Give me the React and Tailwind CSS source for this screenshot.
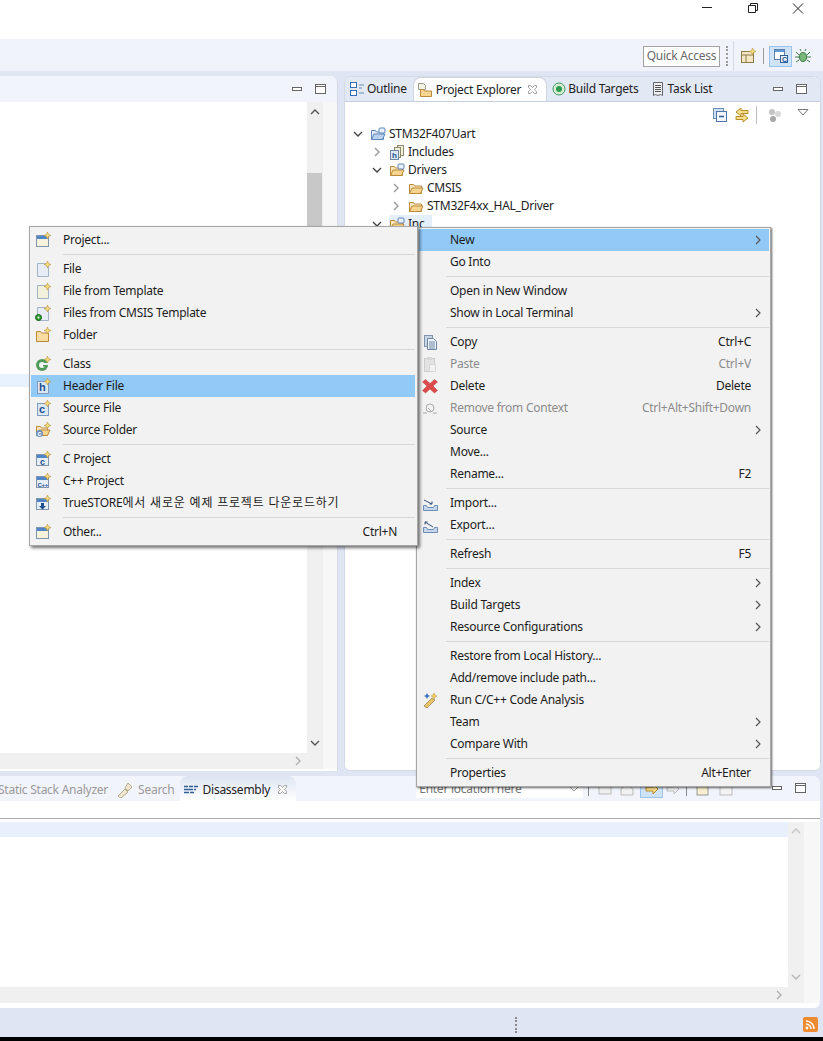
import React from 'react';

const FONT = '"Noto Sans", "Noto Sans CJK KR", sans-serif';

const Star = () => (
  <path d="M12.5 0l1 2.5 2.5 1-2.5 1-1 2.5-1-2.5-2.5-1 2.5-1z" fill="#f6dc7a" stroke="#b8923a" strokeWidth="0.6" />
);

const Svg = ({ children, size = 16, className = '' }) => (
  <svg width={size} height={size} viewBox="0 0 16 16" className={`shrink-0 ${className}`}>{children}</svg>
);

const Page = ({ fill = '#e6edf7' }) => (
  <path d="M2.5 2.5h8l3 3v10h-11z" fill={fill} stroke="#a5b3c6" />
);

const Win = ({ body = '#f7f2dc' }) => (
  <g>
    <rect x="1.5" y="3.5" width="12" height="11" fill={body} stroke="#7f94ad" />
    <rect x="2" y="4" width="11" height="3" fill="#4f86c6" />
  </g>
);

const FolderShape = ({ stroke = '#b98a3c', fill = '#f7d48f' }) => (
  <g>
    <path d="M1.5 13.5v-9h4l1 1.5h6v7.5z" fill="#fbe7bd" stroke={stroke} />
    <path d="M1.5 13.5l2.5-5.5h11l-2.5 5.5z" fill={fill} stroke={stroke} />
  </g>
);

const BlueLetter = ({ ch, x = 4, y = 13, size = 9, color = '#1f4f8f' }) => (
  <text x={x} y={y} fontSize={size} fontWeight="700" fill={color} fontFamily="Liberation Sans, sans-serif">{ch}</text>
);

const ICONS = {
  project: <><Win /><Star /></>,
  file: <><Page /><Star /></>,
  template: <><Page fill="#f3f0dc" /><Star /></>,
  cmsis: <><Page /><circle cx="3.5" cy="12.5" r="3" fill="#2f9e2f" stroke="#15651a" /><circle cx="3.5" cy="12.5" r="1" fill="#fff" /><Star /></>,
  folder: <><path d="M1.5 14.5v-10h4l1 1.5h7v8.5z" fill="#f9dca0" stroke="#b98a3c" /><Star /></>,
  klass: <><circle cx="7" cy="9" r="6" fill="#4f9a58" /><circle cx="7" cy="9" r="3" fill="#f2f2f2" /><rect x="8" y="7" width="5" height="2" fill="#f2f2f2" /><rect x="8" y="9" width="4" height="1.5" fill="#4f9a58" /><Star /></>,
  header: <><rect x="2.5" y="3.5" width="11" height="12" fill="#dbe7f5" stroke="#7f9cc0" /><BlueLetter ch="h" size={11} /><Star /></>,
  source: <><rect x="2.5" y="3.5" width="11" height="12" fill="#dbe7f5" stroke="#7f9cc0" /><BlueLetter ch="c" size={11} /><Star /></>,
  srcFolder: <><FolderShape /><circle cx="4.5" cy="11.5" r="3.5" fill="#6f8fc0" /><BlueLetter ch="c" x={2.4} y={14} size={7} color="#fff" /><Star /></>,
  cProject: <><Win body="#e6eef8" /><BlueLetter ch="c" x={5} y={14} size={9} /><Star /></>,
  cppProject: <><Win body="#e6eef8" /><BlueLetter ch="C++" x={2.4} y={13.5} size={6} /><Star /></>,
  store: <><Win body="#e6eef8" /><path d="M6 8h3v3h2l-3.5 3.5L4 11h2z" fill="#1f4f8f" /><Star /></>,
  copy: (
    <g>
      <rect x="2.5" y="1.5" width="8" height="11" fill="#c9d6e6" stroke="#7f94ad" />
      <path d="M5.5 4.5h6l3 3v8h-9z" fill="#eef3fa" stroke="#6d86a6" />
      <path d="M7 8h6M7 10h6M7 12h6M7 14h6" stroke="#6d86a6" />
    </g>
  ),
  paste: (
    <g opacity="0.55">
      <rect x="2.5" y="2.5" width="10" height="13" fill="#d8d8d8" stroke="#b0b0b0" />
      <rect x="5" y="1" width="5" height="3" fill="#c4c4c4" />
      <path d="M7.5 8.5h6v7h-6z" fill="#f2f2f2" stroke="#c0c0c0" />
    </g>
  ),
  del: <path d="M3.5 1.5L8 5.5l4.5-4 3 2.5L11 8l4.5 4.5-3 2.5L8 11l-4.5 4-3-2.5L5 8 .5 4z" fill="#dc4a4a" stroke="#c23a3a" strokeWidth="0.5" />,
  remove: (
    <g fill="none" stroke="#a8a8a8">
      <path d="M1 13h4M11 13h4" />
      <circle cx="8" cy="8" r="4" />
      <path d="M6 8l3 3" />
    </g>
  ),
  importIcon: (
    <g>
      <path d="M1.5 10.5v5h14v-5h-3l-1 2h-6l-1-2z" fill="#c7d8ec" stroke="#6d8db5" />
      <path d="M2 5l8 4M10 9V6.5M10 9H7.5" stroke="#33507a" fill="none" />
    </g>
  ),
  exportIcon: (
    <g>
      <path d="M1.5 10.5v5h14v-5h-3l-1 2h-6l-1-2z" fill="#c7d8ec" stroke="#6d8db5" />
      <path d="M11 10L3 5M3 5v2.5M3 5h2.5" stroke="#33507a" fill="none" />
    </g>
  ),
  wand: (
    <g>
      <path d="M2 14l8-8 3 2-8 8z" fill="#e8c46a" stroke="#8c6a2a" strokeWidth="0.6" />
      <path d="M5 1l1 2 2 1-2 1-1 2-1-2-2-1 2-1z" fill="#3f6fc0" />
      <path d="M12 1l1 2 2 1-2 1-1 2-1-2-2-1 2-1z" fill="#f2cf5a" stroke="#a9852c" strokeWidth="0.4" />
    </g>
  ),
};

const Icon = ({ name }) => <Svg>{ICONS[name]}</Svg>;

const Arrow = ({ gray }) => (
  <svg width="6" height="10" viewBox="0 0 6 10" className="shrink-0">
    <path d="M1 1l4 4-4 4" fill="none" stroke={gray ? '#aaa' : '#555'} strokeWidth="1.2" />
  </svg>
);

const Sep = ({ className }) => (
  <div className={`h-[7px] flex items-center ${className}`}>
    <div className="h-px w-full bg-[#d7d7d7]" />
  </div>
);

const Item = ({ icon, label, shortcut, arrow, disabled, active, left }) => (
  <div className={`h-[22px] flex items-center text-[12px] tracking-[-0.25px] ${active ? 'bg-[#91c9f7]' : ''} ${disabled ? 'text-[#8c8c8c]' : 'text-[#1c1c1c]'}`}>
    <div className={`flex shrink-0 ${left ? 'w-[32px] pl-[4px]' : 'w-[31px] pl-[3px]'}`}>{icon && <Icon name={icon} />}</div>
    <span className="whitespace-nowrap">{label}</span>
    {shortcut && <span className="ml-auto mr-[18px] whitespace-nowrap">{shortcut}</span>}
    {arrow && <span className="ml-auto mr-[8px]"><Arrow /></span>}
  </div>
);

const NewMenu = () => (
  <div className="absolute left-[29px] top-[226px] w-[389px] h-[320px] z-20 bg-[#f2f2f2] border border-[#a6a6a6] pl-px pr-[2px] pt-[2px] shadow-[2px_2px_3px_rgba(0,0,0,0.55)]">
    <Item left icon="project" label="Project..." />
    <Sep className="ml-[32px]" />
    <Item left icon="file" label="File" />
    <Item left icon="template" label="File from Template" />
    <Item left icon="cmsis" label="Files from CMSIS Template" />
    <Item left icon="folder" label="Folder" />
    <Sep className="ml-[32px]" />
    <Item left icon="klass" label="Class" />
    <Item left active icon="header" label="Header File" />
    <Item left icon="source" label="Source File" />
    <Item left icon="srcFolder" label="Source Folder" />
    <Sep className="ml-[32px]" />
    <Item left icon="cProject" label="C Project" />
    <Item left icon="cppProject" label="C++ Project" />
    <Item left icon="store" label={<>TrueSTORE<span className="tracking-[0.8px]">에서 새로운 예제 프로젝트 다운로드하기</span></>} />
    <Sep className="ml-[32px]" />
    <Item left icon="project" label="Other..." shortcut="Ctrl+N" />
  </div>
);

const ContextMenu = () => (
  <div className="absolute left-[416px] top-[227px] w-[355px] h-[560px] z-10 bg-[#f2f2f2] border border-[#a6a6a6] pl-[2px] pr-px pt-px shadow-[1px_1px_2px_rgba(0,0,0,0.6)]">
    <Item active label="New" arrow />
    <Item label="Go Into" />
    <Sep className="ml-[27px]" />
    <Item label="Open in New Window" />
    <Item label="Show in Local Terminal" arrow />
    <Sep className="ml-[27px]" />
    <Item icon="copy" label="Copy" shortcut="Ctrl+C" />
    <Item disabled icon="paste" label="Paste" shortcut="Ctrl+V" />
    <Item icon="del" label="Delete" shortcut="Delete" />
    <Item disabled icon="remove" label="Remove from Context" shortcut="Ctrl+Alt+Shift+Down" />
    <Item label="Source" arrow />
    <Item label="Move..." />
    <Item label="Rename..." shortcut="F2" />
    <Sep className="ml-[27px]" />
    <Item icon="importIcon" label="Import..." />
    <Item icon="exportIcon" label="Export..." />
    <Sep className="ml-[27px]" />
    <Item label="Refresh" shortcut="F5" />
    <Sep className="ml-[27px]" />
    <Item label="Index" arrow />
    <Item label="Build Targets" arrow />
    <Item label="Resource Configurations" arrow />
    <Sep className="ml-[27px]" />
    <Item label="Restore from Local History..." />
    <Item label="Add/remove include path..." />
    <Item icon="wand" label="Run C/C++ Code Analysis" />
    <Item label="Team" arrow />
    <Item label="Compare With" arrow />
    <Sep className="ml-[27px]" />
    <Item label="Properties" shortcut="Alt+Enter" />
  </div>
);

const MinMax = ({ className = '' }) => (
  <div className={`flex items-center gap-[13px] ${className}`}>
    <svg width="10" height="5" viewBox="0 0 10 5"><rect x="0.5" y="0.5" width="9" height="3" fill="#fff" stroke="#666" /></svg>
    <svg width="11" height="11" viewBox="0 0 11 11"><rect x="0.5" y="0.5" width="10" height="9" fill="#fff" stroke="#666" /><path d="M0 2.5h10" stroke="#666" /></svg>
  </div>
);

const CloseTab = () => (
  <svg width="11" height="11" viewBox="0 0 11 11" className="shrink-0">
    <path d="M1.5 1.5h2l2 2 2-2h2v2l-2 2 2 2v2h-2l-2-2-2 2h-2v-2l2-2-2-2z" fill="#fff" stroke="#8a8a8a" strokeWidth="0.8" />
  </svg>
);

const OutlineIcon = () => (
  <Svg>
    <rect x="1.5" y="1.5" width="6" height="5" fill="#fff" stroke="#2f6fb5" />
    <rect x="1.5" y="9.5" width="6" height="5" fill="#fff" stroke="#2f6fb5" />
    <path d="M10 4h5M10 7h3M10 12h5" stroke="#6a8db5" />
  </Svg>
);

const ExplorerIcon = () => (
  <Svg>
    <path d="M1.5 1.5h5l2 2v4h-7z" fill="#f2f2e6" stroke="#9a9a8a" />
    <path d="M3.5 14.5v-7h3l1 1.5h7v5.5z" fill="#f7d48f" stroke="#b98a3c" />
  </Svg>
);

const TargetIcon = () => (
  <Svg>
    <circle cx="8" cy="8" r="6" fill="#d7ecd7" stroke="#3f9a5a" />
    <circle cx="8" cy="8" r="3" fill="#2f9a4a" />
  </Svg>
);

const TaskIcon = () => (
  <Svg>
    <path d="M3.5 1.5h9v13l-2-1-2.5 1-2.5-1-2 1z" fill="#eef0f4" stroke="#666" />
    <path d="M5 4.5h6M5 6.5h6M5 8.5h6M5 10.5h6" stroke="#555" />
  </Svg>
);

const Chevron = ({ open }) => (
  <svg width="10" height="10" viewBox="0 0 10 10" className="shrink-0">
    <path d={open ? 'M1 3l4 4 4-4' : 'M3 1l4 4-4 4'} fill="none" stroke={open ? '#444' : '#9a9a9a'} strokeWidth="1.4" />
  </svg>
);

const TreeFolder = ({ badge, blue }) => (
  <Svg>
    <path d="M1.5 13.5v-9h4l1 1.5h7v7.5z" fill={blue ? '#dfe9f7' : '#fbe7bd'} stroke={blue ? '#5f86b8' : '#b98a3c'} />
    <path d="M1.5 13.5l2.5-5.5h11l-2.5 5.5z" fill={blue ? '#bcd2ee' : '#f7d48f'} stroke={blue ? '#5f86b8' : '#b98a3c'} />
    {badge && <rect x="9" y="2" width="6" height="5" rx="1" fill="#e9f0f9" stroke="#5f86b8" />}
  </Svg>
);

const IncludesIcon = () => (
  <Svg>
    <rect x="8.5" y="1.5" width="6" height="10" fill="#f4f0dc" stroke="#8a8a6a" />
    <rect x="5.5" y="3.5" width="6" height="10" fill="#f4f0dc" stroke="#8a8a6a" />
    <rect x="1.5" y="6.5" width="8" height="9" fill="#dbe7f5" stroke="#6d86a6" />
    <text x="3" y="14" fontSize="8" fontWeight="700" fill="#1f4f8f" fontFamily="Liberation Sans, sans-serif">h</text>
  </Svg>
);

const TreeRow = ({ indent, open, icon, label, selected }) => (
  <div className={`h-[18px] flex items-center text-[12px] tracking-[-0.25px] text-[#222] ${indent}`}>
    <span className="w-[14px] flex justify-center mr-[5px]"><Chevron open={open} /></span>
    <span className={`flex items-center gap-[3px] whitespace-nowrap ${selected ? 'bg-[#e4effb] pr-[7px] h-full' : ''}`}>
      {icon}
      <span>{label}</span>
    </span>
  </div>
);

const ProjectTree = () => (
  <div className="pt-[23px] pl-[6px]">
    <TreeRow indent="ml-0" open icon={<TreeFolder badge blue />} label="STM32F407Uart" />
    <TreeRow indent="ml-[19px]" icon={<IncludesIcon />} label="Includes" />
    <TreeRow indent="ml-[19px]" open icon={<TreeFolder badge />} label="Drivers" />
    <TreeRow indent="ml-[38px]" icon={<TreeFolder />} label="CMSIS" />
    <TreeRow indent="ml-[38px]" icon={<TreeFolder />} label="STM32F4xx_HAL_Driver" />
    <TreeRow indent="ml-[19px]" open icon={<TreeFolder badge />} label="Inc" selected />
  </div>
);

const TitleBar = () => (
  <div className="h-[39px] bg-white flex items-start justify-end pt-[2px] shrink-0">
    <svg width="130" height="14" viewBox="0 0 130 14" className="mr-[16px]">
      <path d="M25 5.5h10" stroke="#222" />
      <path d="M71.5 3.5h7v7h-7zM73.5 3.5v-2h7v7h-2" fill="none" stroke="#222" />
      <path d="M116 1.5l10 10M126 1.5l-10 10" stroke="#222" />
    </svg>
  </div>
);

const Toolbar = () => (
  <div className="h-[33px] bg-[#f0f3fa] flex items-center justify-end pt-[2px] pr-[12px] shrink-0 border-b border-[#e2e6f2]">
    <div className="w-[77px] h-[21px] bg-white border border-[#a3a3a3] flex items-center justify-center text-[12px] tracking-[-0.25px] text-[#6a6a6a] whitespace-nowrap">Quick Access</div>
    <div className="ml-[6px] w-[2px] h-[20px] border-l-2 border-dotted border-[#9a9a9a]" />
    <div className="ml-[5px] w-px h-[30px] bg-[#d5d9e4]" />
    <Svg className="ml-[6px]">
      <rect x="1.5" y="3.5" width="12" height="11" fill="#f5e6c4" stroke="#8c7a4a" />
      <path d="M1.5 7h12M6 7v8" stroke="#8c7a4a" />
      <Star />
    </Svg>
    <div className="ml-[7px] w-px h-[16px] bg-[#9a9a9a]" />
    <div className="ml-[5px] w-[23px] h-[21px] bg-[#cfe3f8] border border-[#9cc4ea] flex items-center justify-center">
      <Svg>
        <rect x="1.5" y="1.5" width="10" height="10" fill="#fff" stroke="#5f7fa8" />
        <rect x="2" y="2" width="9" height="2" fill="#5f9ad8" />
        <rect x="7.5" y="7.5" width="7" height="7" fill="#e6eef8" stroke="#2f5f96" />
        <text x="9" y="14" fontSize="7" fontWeight="700" fill="#1f4f8f" fontFamily="Liberation Sans, sans-serif">C</text>
      </Svg>
    </div>
    <Svg className="ml-[3px]">
      <ellipse cx="8" cy="9" rx="3.5" ry="4.5" fill="#7ab87a" stroke="#3f7a4a" />
      <path d="M1 4l3 3M15 4l-3 3M0 9h4M16 9h-4M1 14l3-2M15 14l-3-2M6 3L5 1M10 3l1-2" stroke="#3f7a4a" />
    </Svg>
  </div>
);

const LeftPanel = () => (
  <div className="w-[338px] shrink-0 bg-white rounded-tr-[8px] border-r border-[#d4d9e6] flex flex-col overflow-hidden pb-[2px]">
    <div className="h-[26px] bg-[#f2f4fb] flex items-center justify-end pr-[11px] shrink-0">
      <MinMax />
    </div>
    <div className="flex-1 flex min-h-0">
      <div className="flex-1 flex flex-col min-w-0">
        <div className="flex-1 bg-white pt-[272px]">
          <div className="h-[13px] bg-[#e8f2fe]" />
        </div>
        <div className="h-[16px] bg-[#f0f0f0] flex items-center justify-end pr-[6px] shrink-0"><Arrow gray /></div>
      </div>
      <div className="w-[16px] bg-[#f0f0f0] shrink-0 flex flex-col items-center pt-[7px] pb-[23px]">
        <svg width="10" height="6" viewBox="0 0 10 6" className="shrink-0"><path d="M1 5l4-4 4 4" fill="none" stroke="#555" strokeWidth="1.4" /></svg>
        <div className="mt-[58px] w-[15px] mr-px h-[200px] bg-[#c8c8c8] shrink-0" />
        <svg width="10" height="6" viewBox="0 0 10 6" className="mt-auto shrink-0"><path d="M1 1l4 4 4-4" fill="none" stroke="#555" strokeWidth="1.4" /></svg>
      </div>
      <div className="w-[14px] bg-[#f7f7f7] shrink-0" />
    </div>
  </div>
);

const RightPanel = () => (
  <div className="w-[477px] ml-[6px] shrink-0 bg-white rounded-t-[8px] rounded-b-[6px] flex flex-col overflow-hidden border border-[#d4d9e6]">
    <div className="h-[25px] bg-[#e3e9f4] flex items-stretch border-b border-[#c5cedd] shrink-0 text-[12px] tracking-[-0.25px] text-[#222] whitespace-nowrap">
      <div className="flex items-center gap-[2px] pl-[4px] pr-[4px]">
        <OutlineIcon />
        <span>Outline</span>
      </div>
      <div className="ml-[2px] flex items-center gap-[3px] pl-[3px] pr-[8px] bg-white rounded-t-[8px] border border-b-0 border-[#cfd6e4]">
        <ExplorerIcon />
        <span>Project Explorer</span>
        <span className="ml-[3px]"><CloseTab /></span>
      </div>
      <div className="flex items-center gap-[1px] pl-[4px] pr-[4px]">
        <TargetIcon />
        <span>Build Targets</span>
      </div>
      <div className="ml-[4px] flex items-center gap-[1px] pl-[4px] pr-[4px]">
        <TaskIcon />
        <span>Task List</span>
      </div>
      <MinMax className="ml-auto pr-[13px]" />
    </div>
    <div className="flex-1 relative">
      <div className="absolute right-[11px] top-[4px] flex items-center gap-[6px]">
        <Svg>
          <rect x="1.5" y="1.5" width="10" height="10" fill="#cfe0f2" stroke="#6d8db5" />
          <rect x="4.5" y="4.5" width="10" height="10" fill="#f2f6fb" stroke="#4f76a8" />
          <path d="M7 9.5h5" stroke="#2f5f96" strokeWidth="1.4" />
        </Svg>
        <Svg>
          <path d="M7 1L2 5l5 4V6.5h7v-3H7z" fill="#f7de8a" stroke="#b88a2a" />
          <path d="M9 7l5 4-5 4v-2.5H2v-3h7z" fill="#f7de8a" stroke="#b88a2a" />
        </Svg>
        <div className="w-px h-[18px] bg-[#bdbdbd]" />
        <Svg className="ml-[4px]">
          <circle cx="5" cy="5" r="3" fill="#c4c4c4" />
          <circle cx="11" cy="7" r="3" fill="#d8d8d8" />
          <circle cx="6" cy="12" r="3" fill="#a8a8a8" />
        </Svg>
        <svg width="12" height="7" viewBox="0 0 12 7" className="ml-[8px] mb-[6px]"><path d="M1 .5h10L6 6z" fill="#fff" stroke="#777" /></svg>
      </div>
      <ProjectTree />
    </div>
  </div>
);

const LocationBar = () => (
  <div className="ml-[120px] flex items-center shrink-0">
    <div className="w-[167px] h-[19px] bg-white flex items-center justify-between pl-[3px] pr-[4px] text-[12px] tracking-[-0.25px] text-[#777] whitespace-nowrap">
      <span>Enter location here</span>
      <svg width="10" height="6" viewBox="0 0 10 6"><path d="M1 1l4 4 4-4" fill="none" stroke="#999" /></svg>
    </div>
    <div className="ml-[5px] w-px h-[14px] bg-[#888]" />
    <Svg className="ml-[8px]"><rect x="2" y="3" width="12" height="10" fill="#eee" stroke="#bbb" /></Svg>
    <Svg className="ml-[6px]"><path d="M2 8l6-5 6 5v6H2z" fill="#f2f2f2" stroke="#bbb" /></Svg>
    <div className="ml-[5px] w-[23px] h-[19px] bg-[#cfe3f8] border border-[#9cc4ea] flex items-center justify-center">
      <Svg><path d="M9 3l5 5-5 5v-3H2V6h7z" fill="#f7de8a" stroke="#b88a2a" /></Svg>
    </div>
    <Svg className="ml-[2px]"><path d="M9 3l5 5-5 5v-3H2V6h7z" fill="#eee" stroke="#bbb" /></Svg>
    <div className="ml-[5px] w-px h-[14px] bg-[#888]" />
    <Svg className="ml-[8px]"><rect x="2" y="2" width="11" height="12" fill="#f7efcf" stroke="#999" /></Svg>
    <Svg className="ml-[7px]"><rect x="2" y="2" width="12" height="12" fill="#f4f4f4" stroke="#bbb" /></Svg>
  </div>
);

const BottomPanel = () => (
  <div className="h-[232px] bg-white rounded-tr-[8px] rounded-br-[6px] mr-[3px] flex flex-col overflow-hidden shrink-0 pb-[5px]">
    <div className="h-[25px] bg-[#f2f4fb] flex items-stretch shrink-0 text-[12px] tracking-[-0.25px] whitespace-nowrap">
      <div className="flex items-center pt-[2px] text-[#9a9a9a] -ml-[2px]">Static Stack Analyzer</div>
      <div className="flex items-center gap-[5px] pt-[2px] ml-[9px] text-[#9a9a9a]">
        <Svg><path d="M1 14l7-7 3 3-7 6zM8 6l3-5 4 4-4 4z" fill="#efe7d0" stroke="#b5aa8a" /></Svg>
        Search
      </div>
      <div className="flex items-center gap-[4px] pt-[2px] ml-[5px] pl-[3px] pr-[8px] bg-gradient-to-b from-[#dde5f2] to-white rounded-t-[8px] text-[#222]">
        <Svg>
          <path d="M1 4.5h4M6 4.5h4M11 4.5h4M1 7.5h9M11 7.5h2M1 10.5h5M7 10.5h4" stroke="#2f5f96" strokeWidth="1.5" />
        </Svg>
        <span>Disassembly</span>
        <span className="ml-[3px]"><CloseTab /></span>
      </div>
      <LocationBar />
      <div className="ml-auto flex items-center pr-[14px]"><MinMax /></div>
    </div>
    <div className="h-[18px] border-b border-[#ababab] shrink-0" />
    <div className="flex-1 flex pt-[3px] min-h-0">
      <div className="flex-1 flex flex-col min-w-0">
        <div className="flex-1 flex min-h-0">
          <div className="flex-1 flex flex-col">
            <div className="h-[15px] bg-[#e7f0fc]" />
            <div className="flex-1" />
          </div>
          <div className="w-[16px] bg-[#f0f0f0] shrink-0 flex flex-col items-center justify-between pt-[6px] pb-[7px]">
            <svg width="10" height="6" viewBox="0 0 10 6"><path d="M1 5l4-4 4 4" fill="none" stroke="#c4c4c4" strokeWidth="1.4" /></svg>
            <svg width="10" height="6" viewBox="0 0 10 6"><path d="M1 1l4 4 4-4" fill="none" stroke="#b5b5b5" strokeWidth="1.4" /></svg>
          </div>
        </div>
        <div className="h-[16px] bg-[#f0f0f0] flex items-center justify-end pr-[22px] shrink-0"><Arrow gray /></div>
      </div>
      <div className="w-[16px] bg-[#f7f7f7] shrink-0" />
    </div>
  </div>
);

const StatusBar = () => (
  <div className="h-[29px] bg-[#e0e5f4] flex items-center pt-[4px] shrink-0">
    <div className="ml-[515px] w-[2px] h-[16px] border-l-2 border-dotted border-[#8a8a8a]" />
    <div className="ml-auto mr-[5px] w-[15px] h-[15px] rounded-[2px] bg-[#ee8a2f] flex items-center justify-center">
      <svg width="11" height="11" viewBox="0 0 11 11">
        <circle cx="2" cy="9" r="1.4" fill="#fff" />
        <path d="M1 5a5 5 0 0 1 5 5M1 2a8 8 0 0 1 8 8" fill="none" stroke="#fff" strokeWidth="1.4" />
      </svg>
    </div>
  </div>
);

export default function App() {
  return (
    <div className="relative w-[823px] h-[1041px] overflow-hidden bg-[#e0e5f4] flex flex-col" style={{ fontFamily: FONT }}>
      <TitleBar />
      <Toolbar />
      <div className="h-[4px] shrink-0" />
      <div className="h-[695px] flex shrink-0">
        <LeftPanel />
        <RightPanel />
      </div>
      <div className="h-[5px] shrink-0" />
      <BottomPanel />
      <StatusBar />
      <div className="flex-1 bg-black" />
      <NewMenu />
      <ContextMenu />
    </div>
  );
}
